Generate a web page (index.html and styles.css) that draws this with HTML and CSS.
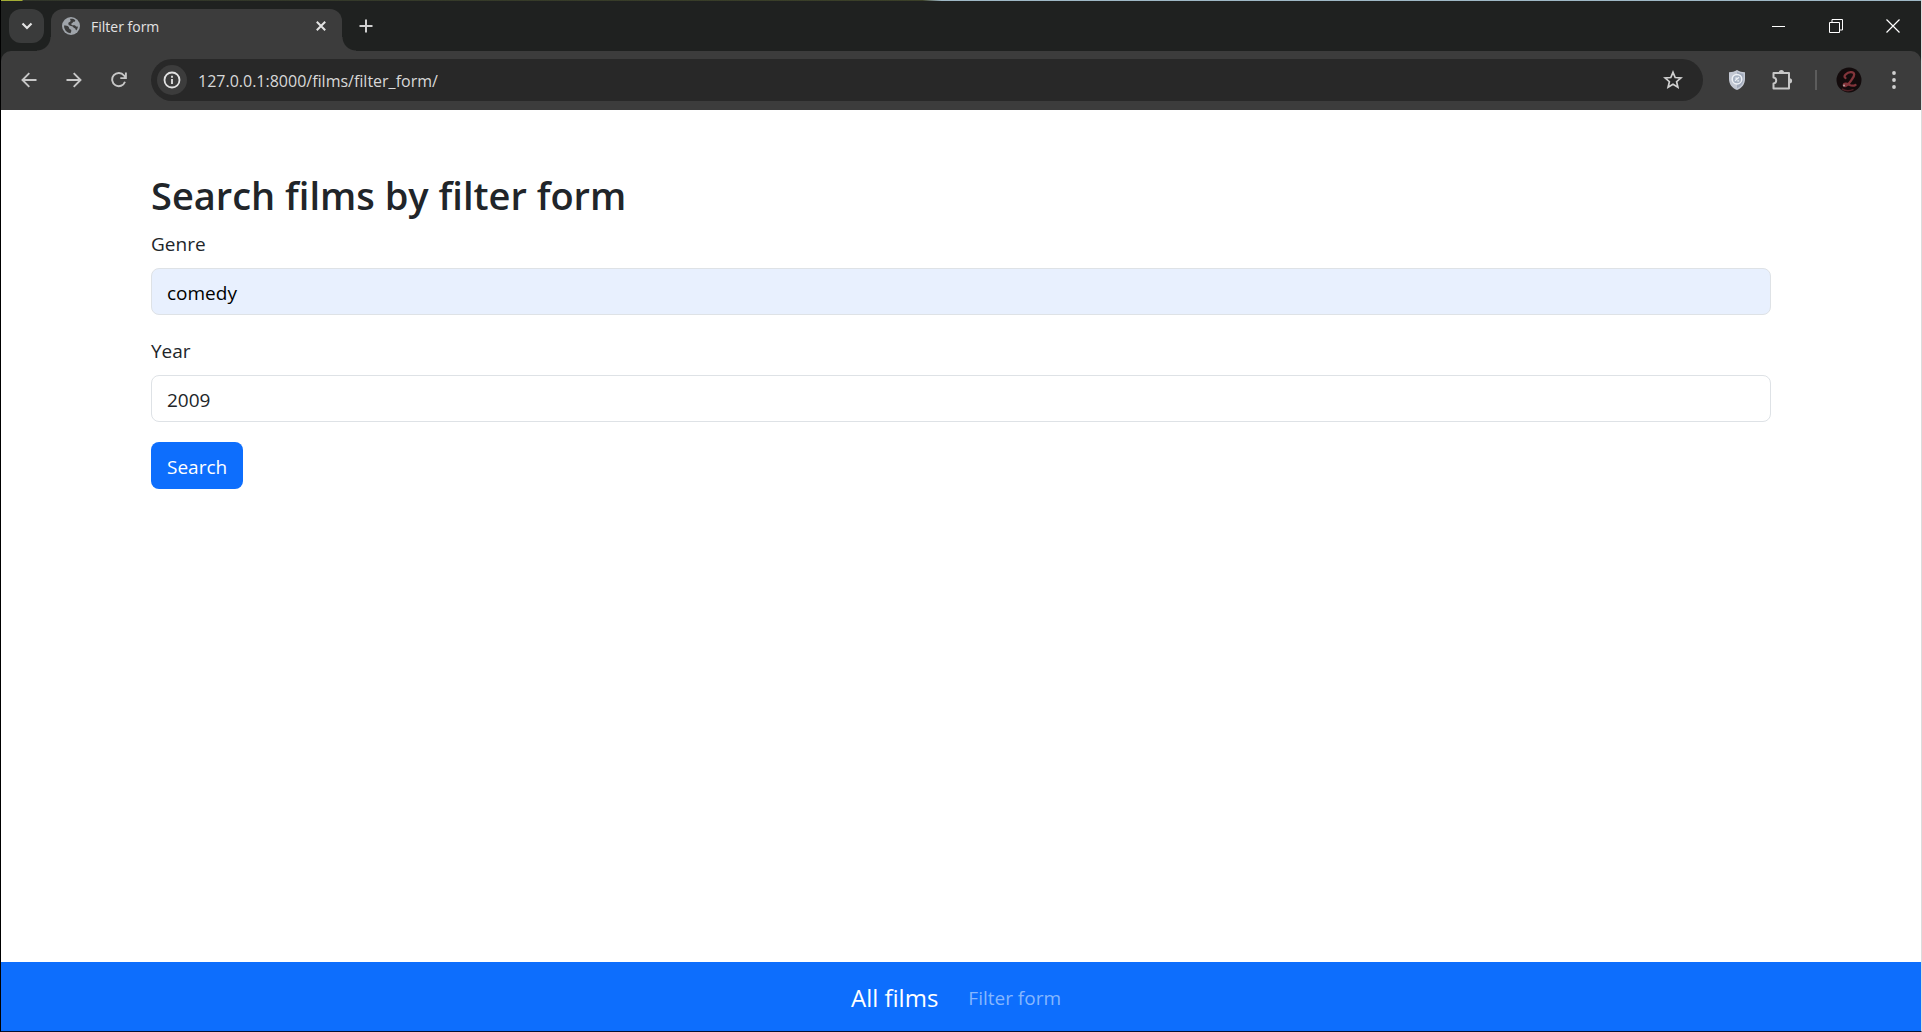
FILE: index.html
```html
<!DOCTYPE html>
<html lang="en">
<head>
<meta charset="utf-8">
<title>Filter form</title>
<link rel="stylesheet" href="styles.css">
</head>
<body>
<div class="window">
  <header class="browser">
    <div class="tabstrip">
      <button class="tab-search" aria-label="Search tabs">
        <svg width="12" height="8" viewBox="0 0 12 8"><path d="M1.500 1.500 6 6l4.500-4.500" fill="none" stroke="#e3e3e3" stroke-width="2.200"/></svg>
      </button>
      <div class="tab">
        <svg width="18" height="18" viewBox="0 0 18 18"><circle cx="9" cy="9" r="9" fill="#9fa4aa"/><path d="M2 8.500c2 0 3.500.2 4.500 1.200s.3 2 1.500 2.500c1.200.4 1.500 1 1.200 2.200-.2.800-.6 1.400-.7 1.800A7.200 7.200 0 0 1 2 8.500zM8 2c1.500-.4 4 0 5.200 1.200.3 1-.6 1.600-1.700 1.600-.8 0-.6 1.200-1.700 1.500-1 .3-.5 1.600.3 1.900 1.200.3 2.600-.3 3.300.6.600.8 1.500 1 2.500.7-.1 1.600-.8 3.100-1.800 4.100-.6-.9-.4-2-1.400-2.300-1.500-.4-1.300-1.600-2.500-2-1.600-.5-3.800-.6-3.900-2.600 0-1.600 1.200-1.700 2-2.300.6-.5.200-1.500-.3-2.400z" fill="#3c3c3c"/></svg>
        <span class="tab-title">Filter form</span>
        <button class="plain" aria-label="Close tab">
          <svg width="10" height="10" viewBox="0 0 10 10"><path d="m.8.8 8.400 8.400m0-8.400L.8 9.200" stroke="#e3e3e3" stroke-width="2"/></svg>
        </button>
      </div>
      <button class="plain new-tab" aria-label="New tab">
        <svg width="14" height="14" viewBox="0 0 14 14"><path d="M7 .5v13M.5 7h13" stroke="#d0d0d0" stroke-width="2"/></svg>
      </button>
      <div class="caption">
        <button class="plain" aria-label="Minimize"><svg width="14" height="14" viewBox="0 0 14 14"><path d="M0 7.500h13" stroke="#fff"/></svg></button>
        <button class="plain" aria-label="Restore"><svg width="14" height="14" viewBox="0 0 14 14"><path d="M.5 3.500h10v10H.5zM3 3V.5h10.500V11H11" fill="none" stroke="#fff"/></svg></button>
        <button class="plain" aria-label="Close"><svg width="14" height="14" viewBox="0 0 14 14"><path d="m.5.5 13 13m0-13-13 13" stroke="#fff" stroke-width="1.200"/></svg></button>
      </div>
    </div>
    <div class="toolbar">
      <div class="nav-buttons">
        <button class="plain" aria-label="Back"><svg width="16" height="16" viewBox="0 0 16 16"><path d="M15.500 8H1.500M8.300 1.200 1.500 8l6.800 6.800" fill="none" stroke="#c7c7c7" stroke-width="1.900"/></svg></button>
        <button class="plain" aria-label="Forward"><svg width="16" height="16" viewBox="0 0 16 16"><path d="M.5 8h14M7.700 1.200 14.500 8l-6.800 6.800" fill="none" stroke="#c7c7c7" stroke-width="1.900"/></svg></button>
        <button class="plain" aria-label="Reload"><svg width="16" height="16" viewBox="0 0 16 16"><path d="M14 9.800A6.600 6.600 0 1 1 13 3.500l1.500 2M14.900.5v5.600H9.300" fill="none" stroke="#c7c7c7" stroke-width="1.900"/></svg></button>
      </div>
      <div class="omnibox">
        <button class="site-info" aria-label="View site information">
          <svg width="18" height="18" viewBox="0 0 18 18"><circle cx="9" cy="9" r="7.500" fill="none" stroke="#e3e3e3" stroke-width="1.800"/><path d="M9 8v5M9 4.800v1.900" stroke="#e3e3e3" stroke-width="1.800"/></svg>
        </button>
        <input class="url" type="text" aria-label="Address" value="127.0.0.1:8000/films/filter_form/">
        <button class="plain" aria-label="Bookmark this page"><svg width="20" height="20" viewBox="0 0 20 20"><path d="m10 2.300 2.200 5.200 5.700.5-4.300 3.700 1.300 5.500-4.900-2.900-4.900 2.900 1.300-5.500L2.100 8l5.700-.5z" fill="none" stroke="#d0d0d0" stroke-width="1.700"/></svg></button>
      </div>
      <div class="extensions">
        <button class="plain" aria-label="Blocker"><svg width="16" height="20" viewBox="0 0 16 20"><path d="M8 0c2.500 1.600 5 2.200 8 2.300V9c0 5-3 9-8 11-5-2-8-6-8-11V2.300C3 2.200 5.500 1.600 8 0z" fill="#c3c8d3"/><path d="M8 1.800c2 1.100 4 1.700 6.500 1.900V9c0 4-2.500 7.500-6.500 9.300z" fill="#a0a9ba"/><circle cx="8" cy="9.200" r="4.800" fill="#a9b4c4" stroke="#eef1f6" stroke-width="1.500"/><path d="M6 10.800 10 7.300M6.300 8.200h2M8.300 10.800h1.800" stroke="#edf0f5" stroke-width="1.200"/></svg></button>
        <button class="plain" aria-label="Extensions"><svg width="22" height="22" viewBox="0 0 22 22"><path d="M2.500 4H18v15.500H2.500v-5c3.600-.4 3.600-5.600 0-6z" fill="none" stroke="#c7c7c7" stroke-width="2" stroke-linejoin="round"/><path d="M7.800 3.500a2.600 2.600 0 0 1 5.200 0zM18.500 9.200a2.600 2.600 0 0 1 0 5.200z" fill="#c7c7c7"/></svg></button>
      </div>
      <span class="divider"></span>
      <button class="plain profile" aria-label="Profile"><svg width="26" height="26" viewBox="0 0 26 26"><circle cx="13" cy="13" r="12.500" fill="#130b0c"/><path d="M9.500 11C6.500 9.500 11 5 15 5.200c4.500.3 3.500 3.600 1.300 6.600-2.300 3.200-4.300 6.700-7 7.200-2.300.3-2-2.500.5-2.300 3.200.2 5.500 3.700 9.700 1.300" fill="none" stroke="#82343a" stroke-width="2.300" stroke-linecap="round"/><path d="M6 22c3 1.800 8 2 11.500.3" fill="none" stroke="#4d2025" stroke-width="1.500"/><circle cx="8" cy="18.500" r="1" fill="#b8a6a4"/></svg></button>
      <button class="plain menu" aria-label="Menu"><svg width="6" height="20" viewBox="0 0 6 20"><g fill="#d0d0d0"><circle cx="3" cy="3" r="1.900"/><circle cx="3" cy="10" r="1.900"/><circle cx="3" cy="17" r="1.900"/></g></svg></button>
    </div>
  </header>
  <main class="page">
    <form class="container">
      <h1>Search films by filter form</h1>
      <label for="genre">Genre</label>
      <input class="field autofilled" id="genre" type="text" value="comedy">
      <label for="year">Year</label>
      <input class="field" id="year" type="text" value="2009">
      <button class="submit" type="button">Search</button>
    </form>
  </main>
  <nav class="navbar">
    <a class="brand" href="#">All films</a>
    <a class="nav-link" href="#">Filter form</a>
  </nav>
</div>
</body>
</html>
```
FILE: styles.css
```css
* { box-sizing: border-box; }

body {
  margin: 0;
  font-family: "Segoe UI", "Open Sans", "Noto Sans", sans-serif;
  font-size: 19px;
  line-height: 30px;
  color: #212529;
  background: #fff;
}

button, input { font: inherit; color: inherit; }
svg { display: block; flex: none; }

.window {
  display: flex;
  flex-direction: column;
  min-height: 100vh;
  border-left: 1px solid #000;
  border-right: 1px solid #dcdcdc;
  border-bottom: 1px solid #06102e;
}

.browser { background: #1f2120; }

.plain {
  display: flex;
  align-items: center;
  justify-content: center;
  padding: 0;
  border: 0;
  background: none;
}

/* Tab strip */
.tabstrip {
  display: flex;
  height: 51px;
  padding: 8px 0 0 8px;
  border-top: 1px solid;
  border-image: linear-gradient(to right, #a3ad35 22px, #30352a 23px, #3b4028 48%, #9fb8c6 49%) 1;
}

.tab-search {
  display: flex;
  align-items: center;
  justify-content: center;
  width: 35px;
  height: 34px;
  padding: 0;
  border: 0;
  border-radius: 12px;
  background: #3a3b3b;
}

.tab {
  position: relative;
  display: flex;
  align-items: center;
  gap: 11px;
  width: 291px;
  margin-left: 7px;
  padding: 0 16px 8px 11px;
  border-radius: 12px 12px 0 0;
  background: #3c3c3c;
}

.tab::before,
.tab::after {
  content: "";
  position: absolute;
  bottom: 0;
  width: 14px;
  height: 14px;
}
.tab::before { right: 100%; background: radial-gradient(circle at 0 0, transparent 13px, #3c3c3c 14px); }
.tab::after { left: 100%; background: radial-gradient(circle at 100% 0, transparent 13px, #3c3c3c 14px); }

.tab-title { flex: 1; padding-top: 1px; font-size: 14px; line-height: 20px; color: #e3e3e3; }

.new-tab { width: 28px; height: 34px; margin-left: 10px; }

.caption { display: flex; margin-left: auto; }
.caption .plain { width: 57px; height: 34px; }

/* Toolbar */
.toolbar {
  display: flex;
  align-items: center;
  height: 59px;
  padding: 0 12px 1px 5px;
  border-radius: 10px 10px 0 0;
  background: #3c3c3c;
}

.nav-buttons { display: flex; width: 145px; }
.nav-buttons .plain { width: 45px; height: 42px; }

.omnibox {
  display: flex;
  flex: 1;
  align-items: center;
  height: 42px;
  padding: 0 20px 0 6px;
  border-radius: 21px;
  background: #282828;
}

.site-info {
  display: flex;
  align-items: center;
  justify-content: center;
  width: 30px;
  height: 30px;
  padding: 0;
  border: 0;
  border-radius: 50%;
  background: #3c3c3c;
}

.url {
  flex: 1;
  min-width: 0;
  padding: 2px 0 0 11px;
  border: 0;
  outline: 0;
  background: none;
  font-size: 16px;
  color: #d8d8d8;
}

.extensions { display: flex; align-items: center; gap: 26px; margin-left: 26px; }
.divider { width: 2px; height: 20px; margin-left: 22px; background: #5c5c5c; }
.profile { margin-left: 19px; }
.menu { width: 30px; margin-left: 17px; }

/* Page */
.page { flex: 1; padding: 60px 15px; }

.container {
  display: flex;
  flex-direction: column;
  align-items: stretch;
  gap: 10px;
  max-width: 1620px;
  margin: 0 auto;
}

h1 {
  margin: 0;
  padding-top: 2px;
  font-size: 38px;
  font-weight: 600;
  line-height: 46px;
}

label { padding-top: 2px; line-height: 28px; }

.field {
  width: 100%;
  height: 47px;
  margin-bottom: 10px;
  padding: 2px 15px 0;
  border: 1px solid #dee2e6;
  border-radius: 8px;
  background: #fff;
}
.autofilled { background: #e8f0fe; color: #000; }

.submit {
  align-self: flex-start;
  height: 47px;
  padding: 2px 16px 0;
  border: 0;
  border-radius: 8px;
  background: #0d6efd;
  color: #fff;
}

.navbar {
  display: flex;
  align-items: center;
  justify-content: center;
  gap: 20px;
  height: 69px;
  padding-top: 2px;
  background: #0d6efd;
}
.navbar a { text-decoration: none; }
.brand { font-size: 24px; color: #fff; }
.nav-link { padding: 0 10px; color: #86b7fe; }
```
